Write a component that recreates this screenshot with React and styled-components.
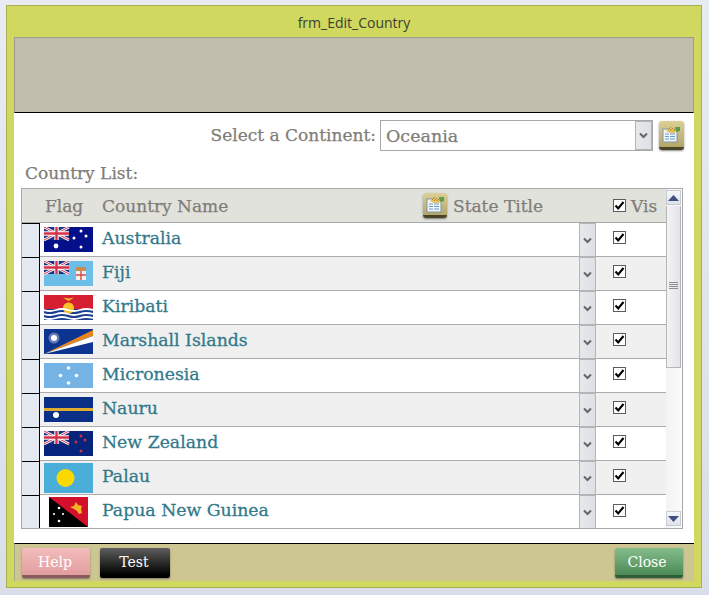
import React from 'react';
import styled, { createGlobalStyle } from 'styled-components';

const Global = createGlobalStyle`
  html, body { margin: 0; padding: 0; background: #e3e6ef; }
  body { width: 709px; height: 595px; overflow: hidden; font-family: "DejaVu Serif", "Liberation Serif", serif; }
  * { box-sizing: border-box; }
`;
const Page = styled.div`
  width: 709px; height: 595px; padding: 5px 6px 7px 6px;
  background: linear-gradient(180deg, #e9ebf3, #d9dee8);
`;
const Frame = styled.div`
  width: 696px; height: 583px; display: flex; flex-direction: column;
  background: #d0d860; border: 1px solid #a9b04e; padding: 0 7px 6px 7px;
`;
const TitleBar = styled.div`
  height: 31px; flex: none; display: flex; align-items: center; justify-content: center;
  font: 14px "Open Sans", sans-serif; color: #3a4030; padding-top: 2px;
`;
const Band = styled.div`
  height: 76px; flex: none; background: #c0bdac; border: 1px solid #9d9c8c; border-bottom: 1px solid #000;
`;
const Content = styled.div`
  flex: 1; background: #fff; display: flex; flex-direction: column; padding: 7px 11px 0 7px; min-height: 0;
`;
const ContinentRow = styled.div`
  display: flex; align-items: center; justify-content: flex-end; gap: 4px; height: 31px; margin-right: -1px;
`;
const Label = styled.span`
  font-size: 17px; color: #7f7d78; -webkit-text-stroke: .25px #7f7d78; padding-bottom: 2px;
`;
const Select = styled.div`
  width: 273px; height: 31px; border: 1px solid #a8a8a8; display: flex; align-items: center; margin-right: 2px;
`;
const SelectValue = styled.div`
  flex: 1; padding-left: 5px; font-size: 17.5px; color: #7f7d78; -webkit-text-stroke: .25px #7f7d78;
`;
const Arrow = styled.div`
  width: 17px; align-self: stretch; flex: none; display: flex; align-items: center; justify-content: center;
  background: linear-gradient(90deg, #e6e8ec, #dde0e4); border: 1px solid #b4b4b4;
`;
const GoldButton = styled.div`
  width: ${p => p.$w}px; height: ${p => p.$h}px; flex: none; border-radius: 3px; display: flex; align-items: center; justify-content: center;
  background: linear-gradient(180deg, #dccf96, #b3a66a); border-bottom: 3px solid #4a4326;
  box-shadow: 0 1px 2px rgba(0,0,0,.45);
`;
const ListLabel = styled(Label).attrs({ as: 'div' })`
  height: 20px; margin: 12px 0 5px 4px; line-height: 20px; padding: 0;
`;
const Grid = styled.div`
  height: 341px; border: 1px solid #a8a8a8; display: flex; flex: none; overflow: hidden;
`;
const Table = styled.div`
  flex: 1; min-width: 0; display: flex; flex-direction: column;
`;
const columns = '18px 4px 49px 1fr 17px 70px';
const HeaderRow = styled.div`
  height: 34px; flex: none; background: #e2e2dc; border-bottom: 1px solid #a8a8a8;
  display: grid; grid-template-columns: ${columns}; align-items: center;
`;
const HeadText = styled.span`
  font-size: 17px; color: #7f7d78; -webkit-text-stroke: .25px #7f7d78; white-space: nowrap;
`;
const FlagHead = styled(HeadText)`
  grid-column: 3; padding-left: 1px;
`;
const NameHead = styled.div`
  display: flex; align-items: center; padding-left: 9px; grid-column: 4 / 6;
`;
const NameTitle = styled(HeadText)`
  width: 321px; flex: none;
`;
const StateHead = styled.div`
  display: flex; align-items: center; gap: 6px; flex: 1;
`;
const VisHead = styled.div`
  display: flex; align-items: center; gap: 5px; padding-left: 17px; grid-column: 6;
`;
const Row = styled.div`
  height: 34px; flex: none; display: grid; grid-template-columns: ${columns}; align-items: center;
  background: ${p => (p.$odd ? '#f0f0f0' : '#fff')};
  border-bottom: 1px solid #ababab;
  &:last-child { border-bottom: 0; }
`;
const RowHead = styled.div`
  align-self: stretch; background: #e4e8f0; border-right: 1px solid #000; border-top: 1px solid #000; margin-bottom: -1px;
  grid-column: 1;
`;
const FlagCell = styled.div`
  grid-column: 3; display: flex; justify-content: center; align-items: center; height: 30px;
`;
const Name = styled.div`
  grid-column: 4; padding: 0 0 4px 9px; font-size: 17.3px; color: #32798a; -webkit-text-stroke: .3px #32798a; white-space: nowrap;
`;
const RowArrow = styled(Arrow)`
  grid-column: 5; margin-bottom: -1px;
`;
const CheckCell = styled.div`
  grid-column: 6; display: flex; padding: 0 0 4px 17px;
`;
const Check = styled.div`
  width: 13px; height: 13px; border: 1px solid #5c5c5c; background: #fff; display: flex; align-items: center; justify-content: center; flex: none;
`;
const Scrollbar = styled.div`
  width: 16px; flex: none; display: flex; flex-direction: column;
  background: linear-gradient(90deg, #f3f3f5, #fbfbfc); padding: 1px 1px 2px 0;
`;
const ScrollBtn = styled.div`
  height: 15px; flex: none; display: flex; align-items: center; justify-content: center;
  border: 1px solid #c9cbd2; background: linear-gradient(#f6f7fa, #dfe2e8);
`;
const Thumb = styled.div`
  height: 162px; flex: none; border: 1px solid #b4b6bc; border-top: 0; margin-top: 1px; background: linear-gradient(90deg, #f3f3f5, #e3e4e8);
  display: flex; align-items: center; justify-content: center; flex-direction: column; gap: 1px; padding-bottom: 3px;
`;
const Grip = styled.i`
  width: 9px; height: 1px; background: #8e8e8e; display: block;
`;
const Track = styled.div` flex: 1; `;
const Footer = styled.div`
  height: 38px; flex: none; background: #cdc692; border-top: 1px solid #000; border-left: 1px solid #aaa98a; display: flex; align-items: flex-start;
  padding: 4px 11px 0 7px; gap: 10px;
`;
const FootBtn = styled.div`
  width: ${p => p.$w}px; height: 30px; border-radius: 2px; display: flex; align-items: center; justify-content: center;
  font-size: 14px; color: #fff; background: ${p => p.$bg}; border-bottom: 3px solid ${p => p.$edge};
  box-shadow: 0 1px 2px rgba(60,50,20,.5); padding-right: ${p => p.$nudge || 0}px;
`;
const Spacer = styled.div` flex: 1; `;

const Chev = () => (
  <svg width="9" height="7" viewBox="0 0 9 7"><path d="M1 1.5 4.5 5 8 1.5" fill="none" stroke="#666" strokeWidth="2" /></svg>
);
const CheckMark = () => (
  <svg width="11" height="11" viewBox="0 0 11 11"><path d="M1.5 5.5 4.2 8.5 9.5 2" fill="none" stroke="#000" strokeWidth="2.1" /></svg>
);
const NoteIcon = () => (
  <svg width="19" height="18" viewBox="0 0 19 18">
    <rect x="1" y="4" width="14" height="13" fill="#eef4fa" stroke="#8494a8" />
    <path d="M3 9h4M8 9h5M3 11.5h4M8 11.5h5M3 14h4M8 14h5" stroke="#6f9bc4" strokeWidth="1.1" />
    <path d="M4 6 9 1l6 4-2 3H8z" fill="#e8c45a" />
    <path d="M6 5l3-3M8 6l3-3M11 6l2-2" stroke="#8a7a50" strokeWidth=".8" />
    <path d="M13 2h5v4l-4 1z" fill="#5f9a4c" />
  </svg>
);

const Union = ({ w = 25, h = 13 }) => (
  <g>
    <rect width={w} height={h} fill="#1d2f7f" />
    <path d={`M0 0 ${w} ${h}M${w} 0 0 ${h}`} stroke="#fff" strokeWidth="2.6" />
    <path d={`M0 0 ${w} ${h}M${w} 0 0 ${h}`} stroke="#d5324a" strokeWidth="1" />
    <path d={`M${w / 2} 0V${h}M0 ${h / 2}H${w}`} stroke="#fff" strokeWidth="4.4" />
    <path d={`M${w / 2} 0V${h}M0 ${h / 2}H${w}`} stroke="#d5324a" strokeWidth="2.4" />
  </g>
);
const Star = ({ x, y, r = 1.5, c = '#fff' }) => <circle cx={x} cy={y} r={r} fill={c} />;
const FlagSvg = ({ w = 49, h = 25, children }) => <svg width={w} height={h} viewBox={`0 0 ${w} ${h}`}>{children}</svg>;

const Flags = {
  au: (<FlagSvg><rect width="49" height="25" fill="#04108a" /><Union /><Star x="12" y="19" r="2.4" /><Star x="37" y="4" /><Star x="30" y="11" /><Star x="42" y="9" /><Star x="37" y="20" /></FlagSvg>),
  fj: (<FlagSvg><rect width="49" height="25" fill="#6cbde8" /><Union /><rect x="32" y="6" width="10" height="4" fill="#c98a50" /><rect x="32" y="10" width="10" height="9" fill="#f3f0ee" /><path d="M37 10v9M32 14h10" stroke="#d84a4a" strokeWidth="1.4" /></FlagSvg>),
  ki: (<FlagSvg><rect width="49" height="25" fill="#1d3f92" /><rect width="49" height="14" fill="#d61f30" /><circle cx="24.5" cy="13" r="5.5" fill="#f7c327" /><path d="M19 2.5 24.5 6 30 2.5 25 3.5z" fill="#f7c327" /><path d="M0 15q6 2 12 0t12 0 12 0 13 0" fill="none" stroke="#fff" strokeWidth="1.8" /><path d="M0 19q6 2 12 0t12 0 12 0 13 0" fill="none" stroke="#fff" strokeWidth="1.8" /><path d="M0 23q6 2 12 0t12 0 12 0 13 0" fill="none" stroke="#fff" strokeWidth="1.8" /></FlagSvg>),
  mh: (<FlagSvg><rect width="49" height="25" fill="#0c3490" /><path d="M0 25 49 1V7z" fill="#e8861e" /><path d="M0 25 49 7V13z" fill="#fff" /><circle cx="10" cy="9" r="3" fill="#fff" /><circle cx="10" cy="9" r="5.5" fill="#fff" opacity=".35" /></FlagSvg>),
  fm: (<FlagSvg><rect width="49" height="25" fill="#74b3e3" /><Star x="24.5" y="5" r="1.8" /><Star x="16.5" y="12.5" r="1.8" /><Star x="32.5" y="12.5" r="1.8" /><Star x="24.5" y="20" r="1.8" /></FlagSvg>),
  nr: (<FlagSvg><rect width="49" height="25" fill="#0a2f86" /><rect y="11" width="49" height="3" fill="#e0ac2f" /><circle cx="12" cy="18" r="3" fill="#fff" /></FlagSvg>),
  nz: (<FlagSvg><rect width="49" height="25" fill="#06247c" /><Union /><Star x="37" y="5" c="#c8334a" /><Star x="32" y="11" c="#c8334a" /><Star x="41" y="9" c="#c8334a" /><Star x="37" y="20" c="#c8334a" /></FlagSvg>),
  pw: (<FlagSvg w={49} h={30}><rect width="49" height="30" fill="#4aaed8" /><circle cx="21.5" cy="15" r="9" fill="#fbd800" /></FlagSvg>),
  pg: (<FlagSvg w={39} h={30}><rect width="39" height="30" fill="#d2102c" /><path d="M0 0 39 30H0z" fill="#000" /><path d="M21 10l4-1 2-4 2 3 4 1-1 3 1 4-3 1-2-3-3-2z" fill="#f4b324" /><Star x="10" y="11" r="1.3" /><Star x="14" y="17" r="1.1" /><Star x="5" y="17" r="1.1" /><Star x="10" y="24" r="1.3" /></FlagSvg>),
};

const countries = [
  ['Australia', 'au'], ['Fiji', 'fj'], ['Kiribati', 'ki'], ['Marshall Islands', 'mh'], ['Micronesia', 'fm'],
  ['Nauru', 'nr'], ['New Zealand', 'nz'], ['Palau', 'pw'], ['Papua New Guinea', 'pg'],
];

export default function App() {
  return (
    <Page>
      <Global />
      <Frame>
        <TitleBar>frm_Edit_Country</TitleBar>
        <Band />
        <Content>
          <ContinentRow>
            <Label>Select a Continent:</Label>
            <Select>
              <SelectValue>Oceania</SelectValue>
              <Arrow><Chev /></Arrow>
            </Select>
            <GoldButton $w={25} $h={29}><NoteIcon /></GoldButton>
          </ContinentRow>
          <ListLabel>Country List:</ListLabel>
          <Grid>
            <Table>
              <HeaderRow>
                <FlagHead>Flag</FlagHead>
                <NameHead>
                  <NameTitle>Country Name</NameTitle>
                  <StateHead>
                    <GoldButton $w={24} $h={25}><NoteIcon /></GoldButton>
                    <HeadText>State Title</HeadText>
                  </StateHead>
                </NameHead>
                <VisHead>
                  <Check><CheckMark /></Check>
                  <HeadText>Vis</HeadText>
                </VisHead>
              </HeaderRow>
              {countries.map(([name, flag], i) => (
                <Row key={name} $odd={i % 2 === 1}>
                  <RowHead />
                  <FlagCell>{Flags[flag]}</FlagCell>
                  <Name>{name}</Name>
                  <RowArrow><Chev /></RowArrow>
                  <CheckCell><Check><CheckMark /></Check></CheckCell>
                </Row>
              ))}
            </Table>
            <Scrollbar>
              <ScrollBtn><svg width="11" height="6" viewBox="0 0 11 6"><path d="M5.5 0 11 6H0z" fill="#3f4f82" /></svg></ScrollBtn>
              <Thumb><Grip /><Grip /><Grip /><Grip /></Thumb>
              <Track />
              <ScrollBtn><svg width="11" height="6" viewBox="0 0 11 6"><path d="M0 0h11L5.5 6z" fill="#3f4f82" /></svg></ScrollBtn>
            </Scrollbar>
          </Grid>
        </Content>
        <Footer>
          <FootBtn $w={68} $nudge={2} $bg="linear-gradient(#f3bcbc, #e29d9f)" $edge="#8a5a5e">Help</FootBtn>
          <FootBtn $w={70} $nudge={2} $bg="linear-gradient(#5e5e5e, #000)" $edge="#000">Test</FootBtn>
          <Spacer />
          <FootBtn $w={68} $nudge={4} $bg="linear-gradient(#85bd8c, #4b8a57)" $edge="#2f5f3a">Close</FootBtn>
        </Footer>
      </Frame>
    </Page>
  );
}
